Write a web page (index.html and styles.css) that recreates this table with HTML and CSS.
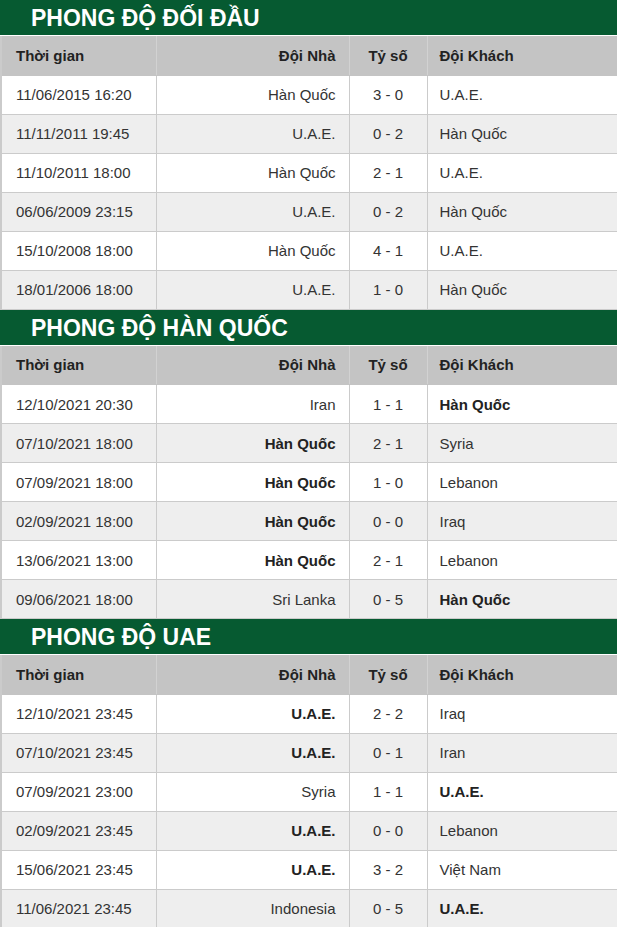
FILE: index.html
```html
<!DOCTYPE html>
<html lang="vi">
<head>
<meta charset="utf-8">
<title>Phong độ</title>
<link rel="stylesheet" href="styles.css">
</head>
<body>
<section class="block">
  <h2 class="title">PHONG ĐỘ ĐỐI ĐẦU</h2>
  <table class="form">
    <colgroup><col class="c1"><col class="c2"><col class="c3"><col class="c4"></colgroup>
    <thead><tr><th class="t">Thời gian</th><th class="h">Đội Nhà</th><th class="s">Tỷ số</th><th class="a">Đội Khách</th></tr></thead>
    <tbody>
      <tr><td class="t">11/06/2015 16:20</td><td class="h">Hàn Quốc</td><td class="s">3 - 0</td><td class="a">U.A.E.</td></tr>
      <tr><td class="t">11/11/2011 19:45</td><td class="h">U.A.E.</td><td class="s">0 - 2</td><td class="a">Hàn Quốc</td></tr>
      <tr><td class="t">11/10/2011 18:00</td><td class="h">Hàn Quốc</td><td class="s">2 - 1</td><td class="a">U.A.E.</td></tr>
      <tr><td class="t">06/06/2009 23:15</td><td class="h">U.A.E.</td><td class="s">0 - 2</td><td class="a">Hàn Quốc</td></tr>
      <tr><td class="t">15/10/2008 18:00</td><td class="h">Hàn Quốc</td><td class="s">4 - 1</td><td class="a">U.A.E.</td></tr>
      <tr><td class="t">18/01/2006 18:00</td><td class="h">U.A.E.</td><td class="s">1 - 0</td><td class="a">Hàn Quốc</td></tr>
    </tbody>
  </table>
</section>
<section class="block">
  <h2 class="title">PHONG ĐỘ HÀN QUỐC</h2>
  <table class="form">
    <colgroup><col class="c1"><col class="c2"><col class="c3"><col class="c4"></colgroup>
    <thead><tr><th class="t">Thời gian</th><th class="h">Đội Nhà</th><th class="s">Tỷ số</th><th class="a">Đội Khách</th></tr></thead>
    <tbody>
      <tr><td class="t">12/10/2021 20:30</td><td class="h">Iran</td><td class="s">1 - 1</td><td class="a"><b>Hàn Quốc</b></td></tr>
      <tr><td class="t">07/10/2021 18:00</td><td class="h"><b>Hàn Quốc</b></td><td class="s">2 - 1</td><td class="a">Syria</td></tr>
      <tr><td class="t">07/09/2021 18:00</td><td class="h"><b>Hàn Quốc</b></td><td class="s">1 - 0</td><td class="a">Lebanon</td></tr>
      <tr><td class="t">02/09/2021 18:00</td><td class="h"><b>Hàn Quốc</b></td><td class="s">0 - 0</td><td class="a">Iraq</td></tr>
      <tr><td class="t">13/06/2021 13:00</td><td class="h"><b>Hàn Quốc</b></td><td class="s">2 - 1</td><td class="a">Lebanon</td></tr>
      <tr><td class="t">09/06/2021 18:00</td><td class="h">Sri Lanka</td><td class="s">0 - 5</td><td class="a"><b>Hàn Quốc</b></td></tr>
    </tbody>
  </table>
</section>
<section class="block">
  <h2 class="title">PHONG ĐỘ UAE</h2>
  <table class="form">
    <colgroup><col class="c1"><col class="c2"><col class="c3"><col class="c4"></colgroup>
    <thead><tr><th class="t">Thời gian</th><th class="h">Đội Nhà</th><th class="s">Tỷ số</th><th class="a">Đội Khách</th></tr></thead>
    <tbody>
      <tr><td class="t">12/10/2021 23:45</td><td class="h"><b>U.A.E.</b></td><td class="s">2 - 2</td><td class="a">Iraq</td></tr>
      <tr><td class="t">07/10/2021 23:45</td><td class="h"><b>U.A.E.</b></td><td class="s">0 - 1</td><td class="a">Iran</td></tr>
      <tr><td class="t">07/09/2021 23:00</td><td class="h">Syria</td><td class="s">1 - 1</td><td class="a"><b>U.A.E.</b></td></tr>
      <tr><td class="t">02/09/2021 23:45</td><td class="h"><b>U.A.E.</b></td><td class="s">0 - 0</td><td class="a">Lebanon</td></tr>
      <tr><td class="t">15/06/2021 23:45</td><td class="h"><b>U.A.E.</b></td><td class="s">3 - 2</td><td class="a">Việt Nam</td></tr>
      <tr><td class="t">11/06/2021 23:45</td><td class="h">Indonesia</td><td class="s">0 - 5</td><td class="a"><b>U.A.E.</b></td></tr>
    </tbody>
  </table>
</section>
</body>
</html>
```
FILE: styles.css
```css
html, body {
  margin: 0;
  padding: 0;
  background: #fff;
}
body {
  width: 617px;
  font-family: "Liberation Sans", Arial, sans-serif;
  color: #333;
}
.block {
  display: flex;
  flex-direction: column;
}
.title {
  margin: 0;
  height: 35px;
  border-bottom: 1px solid #fff;
  background: #065a31;
  color: #fff;
  font-size: 23px;
  font-weight: bold;
  line-height: 37px;
  padding-left: 31px;
  white-space: nowrap;
}
.form {
  width: 617px;
  border-collapse: collapse;
  table-layout: fixed;
  font-size: 15px;
}
.c1 { width: 155px; }
.c2 { width: 193px; }
.c3 { width: 78px; }
.c4 { width: 191px; }
.form th,
.form td {
  height: 39px;
  padding: 0 13px;
  box-sizing: border-box;
  white-space: nowrap;
  overflow: hidden;
}
.form th {
  background: #c4c4c4;
  color: #222;
  font-weight: bold;
  border-left: 1px solid #d2d2d2;
  border-bottom: 1px solid #c4c4c4;
}
.form td {
  border-left: 1px solid #cbcbcb;
  border-bottom: 1px solid #cbcbcb;
}
.form th:first-child,
.form td:first-child {
  border-left: 2px solid #cbcbcb;
}
.form th:last-child,
.form td:last-child {
  border-right: 1px solid #dcdcdc;
}
.form tbody tr:nth-child(odd) td { background: #fff; }
.form tbody tr:nth-child(even) td { background: #eeeeee; }
.form .t { text-align: left; padding-left: 14px; }
.form .h { text-align: right; }
.form .s { text-align: center; padding: 0 4px; }
.form .a { text-align: left; padding-left: 12px; }
.form b { font-weight: bold; color: #222; }
```
